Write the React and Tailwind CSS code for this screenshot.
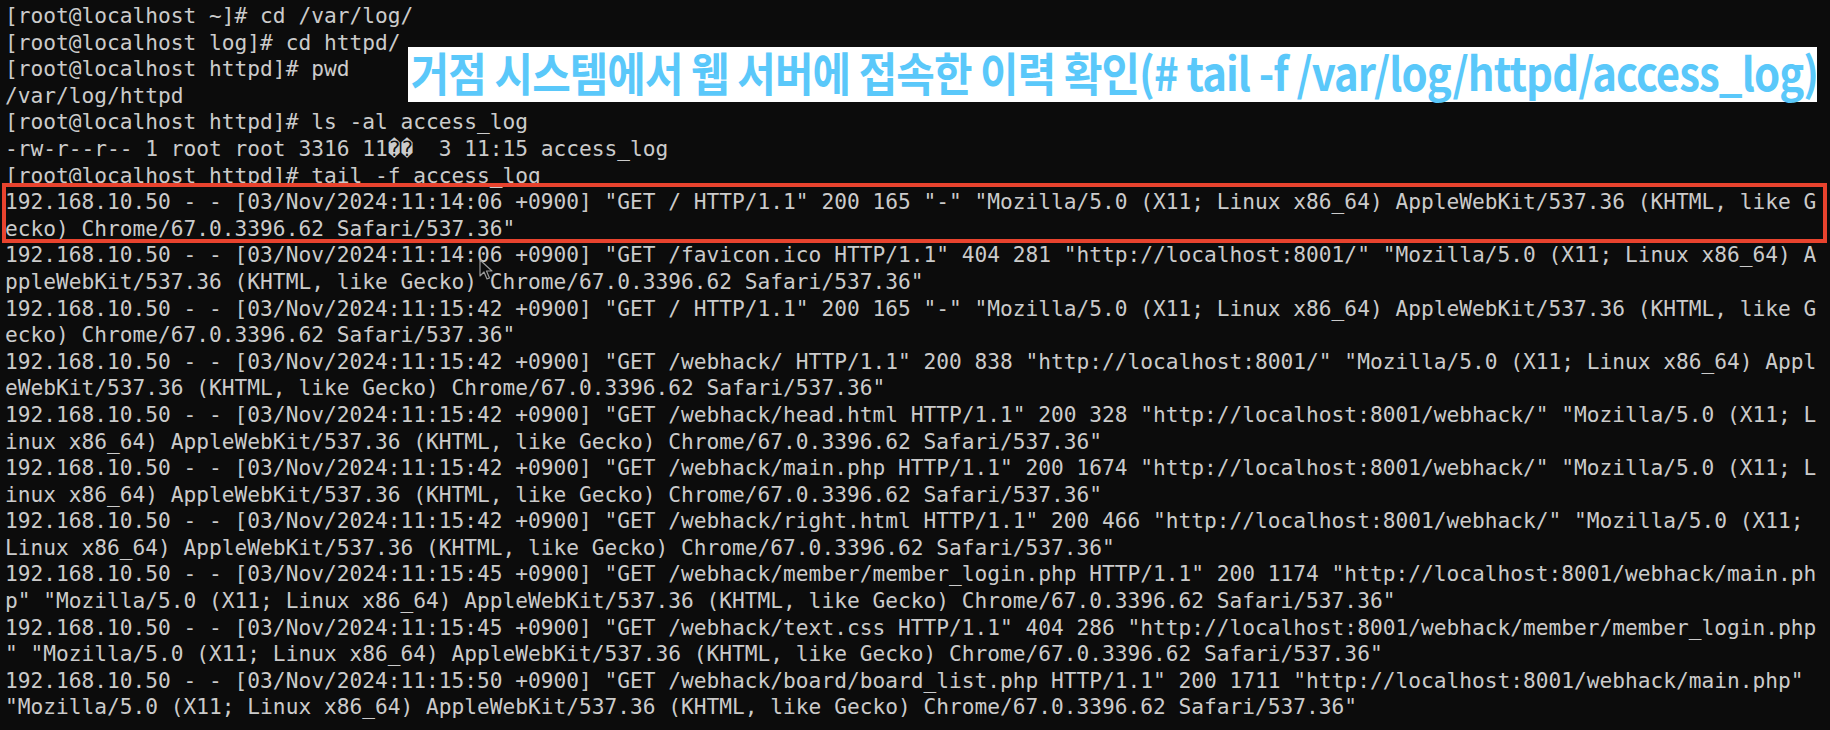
const LINES = [
  '[root@localhost ~]# cd /var/log/',
  '[root@localhost log]# cd httpd/',
  '[root@localhost httpd]# pwd',
  '/var/log/httpd',
  '[root@localhost httpd]# ls -al access_log',
  '-rw-r--r-- 1 root root 3316 11\uFFFD\uFFFD  3 11:15 access_log',
  '[root@localhost httpd]# tail -f access_log',
  '192.168.10.50 - - [03/Nov/2024:11:14:06 +0900] "GET / HTTP/1.1" 200 165 "-" "Mozilla/5.0 (X11; Linux x86_64) AppleWebKit/537.36 (KHTML, like G',
  'ecko) Chrome/67.0.3396.62 Safari/537.36"',
  '192.168.10.50 - - [03/Nov/2024:11:14:06 +0900] "GET /favicon.ico HTTP/1.1" 404 281 "http://localhost:8001/" "Mozilla/5.0 (X11; Linux x86_64) A',
  'ppleWebKit/537.36 (KHTML, like Gecko) Chrome/67.0.3396.62 Safari/537.36"',
  '192.168.10.50 - - [03/Nov/2024:11:15:42 +0900] "GET / HTTP/1.1" 200 165 "-" "Mozilla/5.0 (X11; Linux x86_64) AppleWebKit/537.36 (KHTML, like G',
  'ecko) Chrome/67.0.3396.62 Safari/537.36"',
  '192.168.10.50 - - [03/Nov/2024:11:15:42 +0900] "GET /webhack/ HTTP/1.1" 200 838 "http://localhost:8001/" "Mozilla/5.0 (X11; Linux x86_64) Appl',
  'eWebKit/537.36 (KHTML, like Gecko) Chrome/67.0.3396.62 Safari/537.36"',
  '192.168.10.50 - - [03/Nov/2024:11:15:42 +0900] "GET /webhack/head.html HTTP/1.1" 200 328 "http://localhost:8001/webhack/" "Mozilla/5.0 (X11; L',
  'inux x86_64) AppleWebKit/537.36 (KHTML, like Gecko) Chrome/67.0.3396.62 Safari/537.36"',
  '192.168.10.50 - - [03/Nov/2024:11:15:42 +0900] "GET /webhack/main.php HTTP/1.1" 200 1674 "http://localhost:8001/webhack/" "Mozilla/5.0 (X11; L',
  'inux x86_64) AppleWebKit/537.36 (KHTML, like Gecko) Chrome/67.0.3396.62 Safari/537.36"',
  '192.168.10.50 - - [03/Nov/2024:11:15:42 +0900] "GET /webhack/right.html HTTP/1.1" 200 466 "http://localhost:8001/webhack/" "Mozilla/5.0 (X11;',
  'Linux x86_64) AppleWebKit/537.36 (KHTML, like Gecko) Chrome/67.0.3396.62 Safari/537.36"',
  '192.168.10.50 - - [03/Nov/2024:11:15:45 +0900] "GET /webhack/member/member_login.php HTTP/1.1" 200 1174 "http://localhost:8001/webhack/main.ph',
  'p" "Mozilla/5.0 (X11; Linux x86_64) AppleWebKit/537.36 (KHTML, like Gecko) Chrome/67.0.3396.62 Safari/537.36"',
  '192.168.10.50 - - [03/Nov/2024:11:15:45 +0900] "GET /webhack/text.css HTTP/1.1" 404 286 "http://localhost:8001/webhack/member/member_login.php',
  '" "Mozilla/5.0 (X11; Linux x86_64) AppleWebKit/537.36 (KHTML, like Gecko) Chrome/67.0.3396.62 Safari/537.36"',
  '192.168.10.50 - - [03/Nov/2024:11:15:50 +0900] "GET /webhack/board/board_list.php HTTP/1.1" 200 1711 "http://localhost:8001/webhack/main.php"',
  '"Mozilla/5.0 (X11; Linux x86_64) AppleWebKit/537.36 (KHTML, like Gecko) Chrome/67.0.3396.62 Safari/537.36"',
];

function Pointer() {
  return (
    <svg className="absolute left-[479px] top-[259px]" width="16" height="22" viewBox="0 0 16 22">
      <path d="M1 1 L1 17 L5 13 L8 20 L10.5 19 L7.5 12 L13 12 Z" fill="#0c0c0c" stroke="#9a9a9a" strokeWidth="1.2" strokeLinejoin="round" />
    </svg>
  );
}

export default function App() {
  return (
    <div className="relative w-full h-[730px] overflow-hidden bg-[#0c0c0c]">
      <div className="pl-[5px] pt-[3px] font-['DejaVu_Sans_Mono',monospace] text-[21.2px] leading-[26.6px] text-[#cbcbcb] whitespace-pre">
        {LINES.map((line, i) => (
          <div key={i}>{line}</div>
        ))}
        <div className="h-[26.6px] flex items-center">
          <span className="w-[2px] h-[14px] bg-[#bdbdbd] mt-[12px]" />
        </div>
      </div>

      {/* highlighted log entry */}
      <div className="absolute left-[2px] top-[183px] w-[1825px] h-[60px] border-[4px] border-[#e8432e]" />

      {/* callout */}
      <div className="absolute left-[408px] top-[47px] w-[1409px] h-[55px] bg-white flex items-center pb-[7px]">
        <span className="block origin-left scale-x-[0.91] whitespace-nowrap pl-[3px] font-['Noto_Sans_CJK_KR',sans-serif] font-bold text-[46px] leading-none text-[#5ac8fa] tracking-[-1px]">
          거점 시스템에서 웹 서버에 접속한 이력 확인(# tail -f /var/log/httpd/access_log)
        </span>
      </div>

      <Pointer />
    </div>
  );
}
